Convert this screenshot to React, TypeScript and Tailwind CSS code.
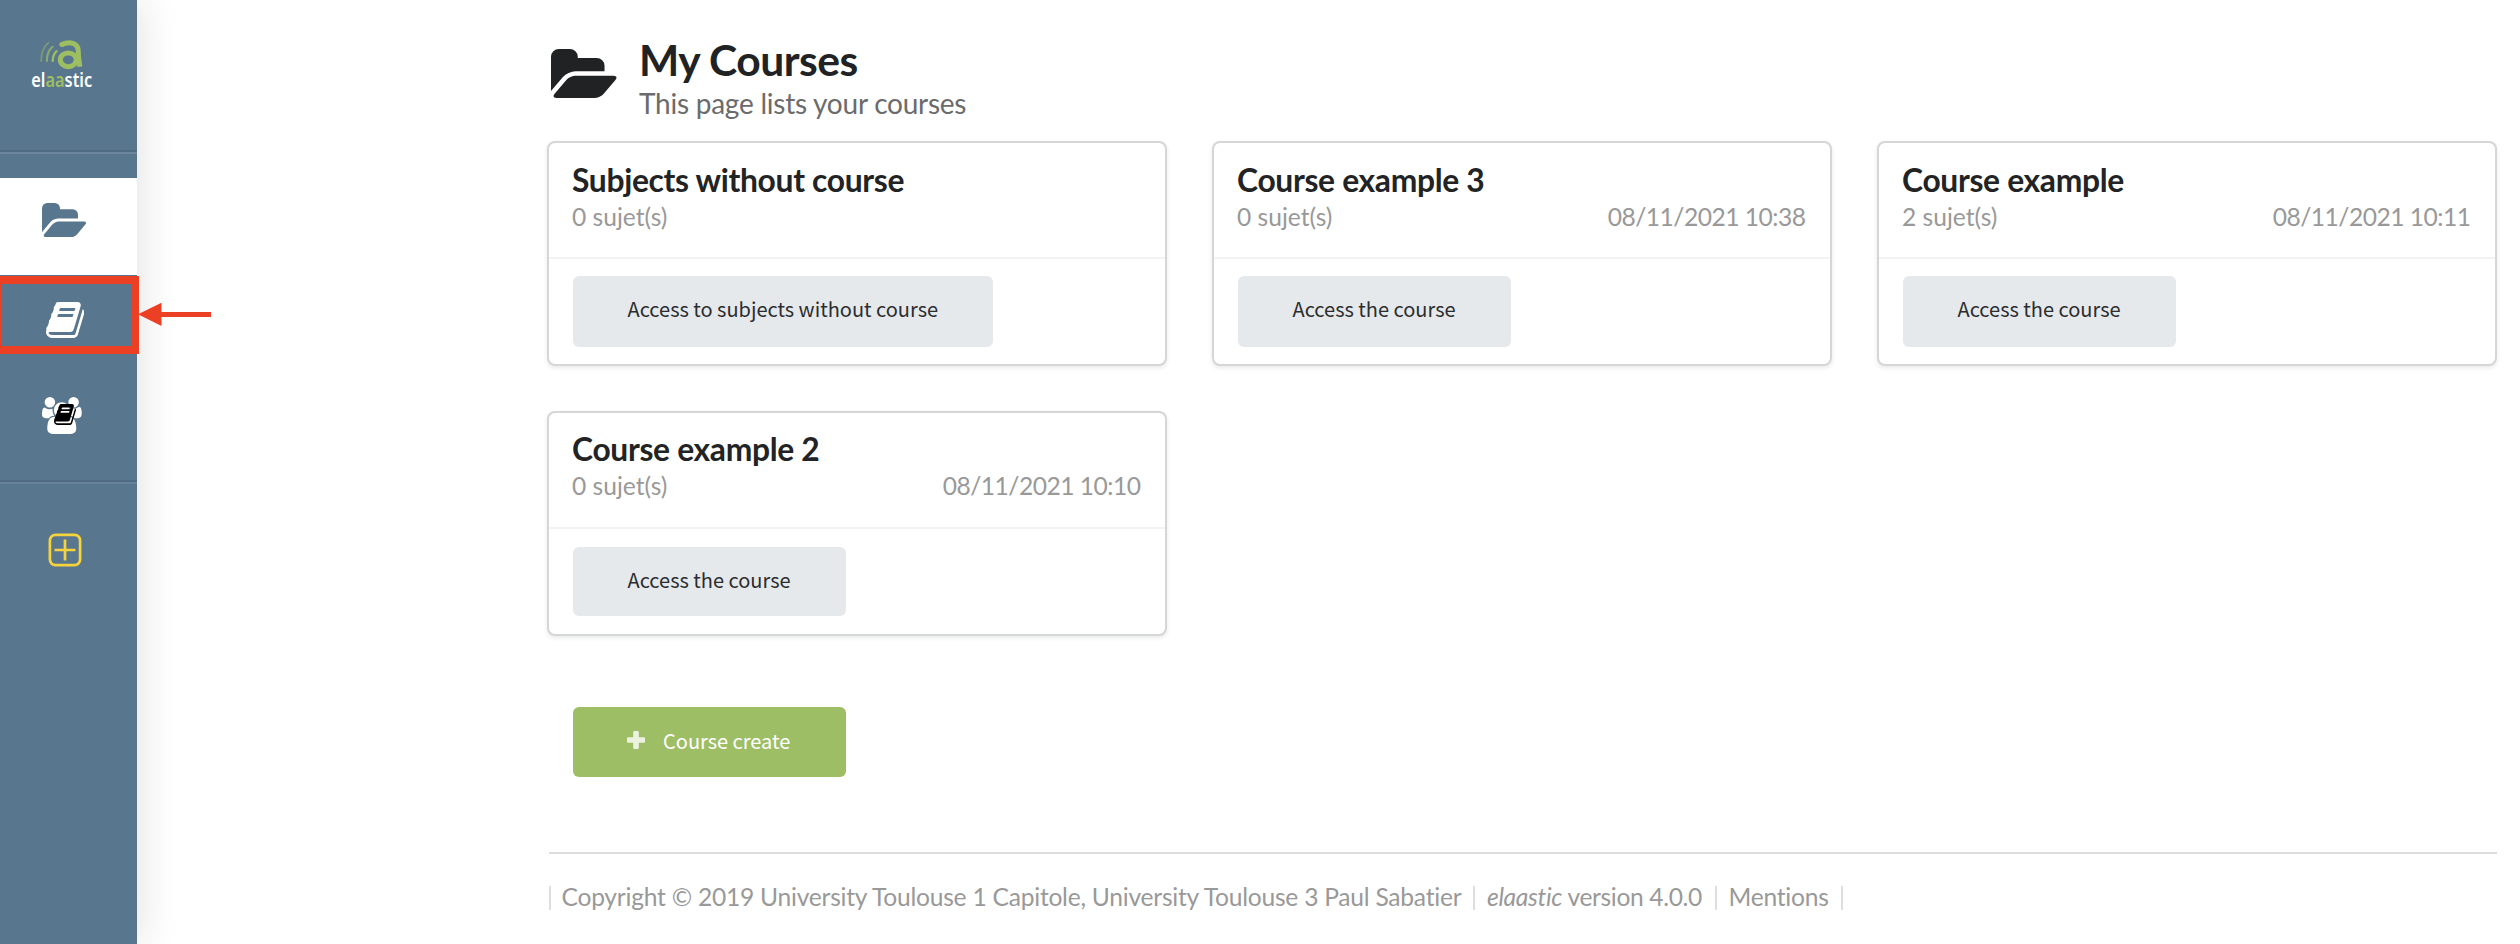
import type { ReactNode } from 'react';

const LATO = "font-['Lato',sans-serif] [font-variant-ligatures:none]";
const SOURCE = "font-['Noto_Sans_CJK_SC',sans-serif]";

function FolderOpenIcon({ className }: { className: string }) {
  return (
    <svg viewBox="0 128 1879 1408" preserveAspectRatio="none" fill="currentColor" className={className}>
      <path d="M1879 952q0 31-31 66l-336 396q-43 51-120.5 86.5t-143.5 35.5h-1088q-34 0-60.5-13t-26.5-43q0-31 31-66l336-396q43-51 120.5-86.5t143.5-35.5h1088q34 0 60.5 13t26.5 43zm-343-344v160h-832q-94 0-197 47.5t-164 119.5l-337 396-5 6q0-4-.5-12.5t-.5-12.5v-960q0-92 66-158t158-66h320q92 0 158 66t66 158v32h544q92 0 158 66t66 158z" />
    </svg>
  );
}

function BookIcon({ className }: { className: string }) {
  return (
    <svg viewBox="64 128 1667 1536" preserveAspectRatio="none" fill="currentColor" className={className}>
      <path d="M1703 478q40 57 18 129l-275 906q-19 64-76.5 107.5t-122.5 43.5h-923q-77 0-148.5-53.5t-99.5-131.5q-24-67-2-127 0-4 3-27t4-37q1-8-3-21.5t-3-19.5q2-11 8-21t16.5-23.5 16.5-23.5q23-38 45-91.5t30-91.5q3-10 .5-30t-.5-28q3-11 17-28t17-23q21-36 42-92t25-90q1-9-2.5-32t.5-28q4-13 22-30.5t22-22.5q19-26 42.5-84.5t27.5-96.5q1-8-3-25.5t-2-26.5q2-8 9-18t18-23 17-21q8-12 16.5-30.5t15-35 16-36 19.5-32 26.5-23.5 36-11.5 47.5 5.5l-1 3q38-9 51-9h761q74 0 114 56t18 130l-274 906q-36 119-71.5 153.5t-128.5 34.5h-869q-27 0-38 15-11 16-1 43 24 70 144 70h923q29 0 56-15.5t35-41.5l300-987q7-22 5-57 38 15 59 43zm-1064 2q-4 13 2 22.5t20 9.5h608q13 0 25.5-9.5t16.5-22.5l21-64q4-13-2-22.5t-20-9.5h-608q-13 0-25.5 9.5t-16.5 22.5zm-83 256q-4 13 2 22.5t20 9.5h608q13 0 25.5-9.5t16.5-22.5l21-64q4-13-2-22.5t-20-9.5h-608q-13 0-25.5 9.5t-16.5 22.5z" />
    </svg>
  );
}

function UsersIcon({ className }: { className: string }) {
  return (
    <svg viewBox="-64 0 1920 1792" preserveAspectRatio="none" fill="currentColor" className={className}>
      <path d="M529 896q-162 5-265 128h-134q-82 0-138-40.5t-56-118.5q0-353 124-353 6 0 43.5 21t97.5 42.5 119 21.5q67 0 133-23-5 37-5 66 0 159 93 291zm1071 637q0 120-73 189.5t-194 69.5h-874q-121 0-194-69.5t-73-189.5q0-53 3.5-103.5t14-109 26.5-108.5 43-97.5 62-81 85.5-53.5 111.5-20q10 0 43 21.5t73 48 107 48 135 21.5 135-21.5 107-48 73-48 43-21.5q61 0 111.5 20t85.5 53.5 62 81 43 97.5 26.5 108.5 14 109 3.5 103.5zm-1024-1277q0 106-75 181t-181 75-181-75-75-181 75-181 181-75 181 75 75 181zm704 384q0 159-112.5 271.5t-271.5 112.5-271.5-112.5-112.5-271.5 112.5-271.5 271.5-112.5 271.5 112.5 112.5 271.5zm576 225q0 78-56 118.5t-138 40.5h-134q-103-123-265-128 93-132 93-291 0-29-5-66 66 23 133 23 59 0 119-21.5t97.5-42.5 43.5-21q124 0 124 353zm-128-609q0 106-75 181t-181 75-181-75-75-181 75-181 181-75 181 75 75 181z" />
    </svg>
  );
}

function Logo() {
  return (
    <svg viewBox="26 34 74 66" className="h-[66px] w-[74px] overflow-visible" fill="none" strokeLinecap="round">
      <g stroke="#9ebe62">
        <path d="M41.2 61Q41 49 48.4 42.6" strokeWidth="1.8" opacity="0.5" />
        <path d="M46.9 61Q46.8 51.5 52.6 46.8" strokeWidth="2.1" opacity="0.75" />
        <path d="M52.7 61Q53 54.2 56.6 51.2" strokeWidth="2.3" />
        <path d="M61.8 44.5C69 41.2 78.3 42.3 78.3 51.5C78.3 58 79.2 61 79.8 66.7" strokeWidth="5" strokeLinecap="butt" />
        <path d="M61.8 44.5L62.5 44.2" strokeWidth="5" />
        <ellipse cx="68.3" cy="59.8" rx="8" ry="6.9" strokeWidth="5" />
      </g>
      <text x="31.3" y="87" textLength="60.8" lengthAdjust="spacingAndGlyphs" fill="#fff" className="font-['Noto_Sans',sans-serif] text-[20px] font-semibold">
        el<tspan fill="#9ebe62">aa</tspan>stic
      </text>
    </svg>
  );
}

function Sidebar() {
  return (
    <nav className="relative h-[944px] w-[137px] shrink-0 bg-[#58768e] shadow-[0_0_40px_rgba(34,36,38,0.15)]">
      <div className="flex h-[150px] items-start pt-[34px] pl-[26px]">
        <Logo />
      </div>
      <div className="h-1 border-t-2 border-b-2 border-t-[#506c83] border-b-[#6a859b]" />
      <div className="mt-6 flex h-[97px] items-start bg-white pt-[25px] pl-[42px]">
        <FolderOpenIcon className="h-[34px] w-11 text-[#58768e]" />
      </div>
      <div className="flex h-[99px] items-start pt-[27px] pl-[45.5px] text-white">
        <BookIcon className="h-9 w-[38.5px]" />
      </div>
      <div className="flex h-[106px] items-start pt-[22.5px] pl-[42px] text-white">
        <div className="relative">
          <UsersIcon className="h-[37px] w-[39.5px]" />
          <BookIcon className="absolute top-[7px] left-3 h-[21px] w-[22px] text-black" />
        </div>
      </div>
      <div className="h-1 border-t-2 border-b-2 border-t-[#506c85] border-b-[#66819a]" />
      <div className="flex pt-[48.5px] pl-[48px]">
        <svg viewBox="0 0 34 34" className="h-[34px] w-[34px]" fill="none" stroke="#f6d33c" strokeWidth="2.7">
          <rect x="1.9" y="1.9" width="30.2" height="30.2" rx="5.5" />
          <path d="M17 6.5v21M6.5 17h21" />
        </svg>
      </div>
      <div className="absolute top-[276px] left-[-7px] h-[78px] w-[146px] border-8 border-[#ec4025]" />
      <svg viewBox="0 0 74 24" className="absolute top-[302px] left-[138px] h-6 w-[74px]" fill="#ec4025">
        <path d="M0 12.3L23.5 .8V10H73V15H23.5V24Z" />
      </svg>
    </nav>
  );
}

interface Course {
  title: string;
  count: string;
  date?: string;
  action: string;
  second?: boolean;
}

const courses: Course[] = [
  { title: 'Subjects without course', count: '0 sujet(s)', action: 'Access to subjects without course' },
  { title: 'Course example 3', count: '0 sujet(s)', date: '08/11/2021 10:38', action: 'Access the course' },
  { title: 'Course example', count: '2 sujet(s)', date: '08/11/2021 10:11', action: 'Access the course' },
  { title: 'Course example 2', count: '0 sujet(s)', date: '08/11/2021 10:10', action: 'Access the course', second: true },
];

function CourseCard({ title, count, date, action, second }: Course) {
  return (
    <article className="h-[225px] rounded-lg border-2 border-[#d6d6d7] bg-white shadow-[0_2px_4px_rgba(34,36,38,0.1)]">
      <div className={`h-[114px] px-[23px] ${second ? 'pt-4' : 'pt-[17px]'}`}>
        <h2 className="mb-px text-[31.8px] leading-10 font-bold tracking-[-0.32px] text-[#222324]">{title}</h2>
        <div className="flex justify-between pr-[1.5px] text-[24.6px] leading-8 text-[#999]">
          <span>{count}</span>
          {date && <span className="tracking-[-0.5px]">{date}</span>}
        </div>
      </div>
      <div className={`border-t-2 border-[#f3f3f4] px-[23.5px] ${second ? 'pt-[18px]' : 'pt-[17px]'}`}>
        <button className={`rounded-md bg-[#e5e9ec] px-[55px] text-[20px] tracking-[-0.01px] text-[#2c2d2e] ${SOURCE} ${second ? 'h-[69px] pb-[3px]' : 'h-[71px] pb-[5px]'}`}>
          {action}
        </button>
      </div>
    </article>
  );
}

function FooterItem({ className, children }: { className: string; children?: ReactNode }) {
  return <span className={`h-6 shrink-0 border-l-2 border-[#dedede] whitespace-nowrap ${className}`}>{children}</span>;
}

export default function App() {
  return (
    <div className={`flex h-[944px] w-[2520px] overflow-hidden bg-white ${LATO}`}>
      <Sidebar />
      <main className="ml-[410px] w-[1950px]">
        <header className="flex h-[141px] pt-[34px] pl-1">
          <FolderOpenIcon className="mt-[15px] h-[49px] w-[65.5px] text-[#212223]" />
          <div className="ml-[22.5px] pt-px">
            <h1 className="text-[42.6px] leading-[50px] font-bold tracking-[-0.5px] text-[#212223]">My Courses</h1>
            <p className="mt-px text-[28px] leading-[34px] tracking-[-0.24px] text-[#6b6b6b]">This page lists your courses</p>
          </div>
        </header>
        <section className="grid grid-cols-[620px_620px_620px] gap-[45px]">
          {courses.map((course) => (
            <CourseCard key={course.title} {...course} />
          ))}
        </section>
        <button className={`mt-[71px] ml-[25.5px] flex h-[70px] w-[273px] items-center rounded-md bg-[#9ebe65] pl-[54px] text-[20px] text-white ${SOURCE}`}>
          <svg viewBox="0 0 18 18" className="mb-1 h-[18px] w-[18px] opacity-80" fill="#fff">
            <path d="M7.2 0h3.6a1 1 0 0 1 1 1v5.3h5.2a1 1 0 0 1 1 1v3.4a1 1 0 0 1-1 1h-5.2v5.3a1 1 0 0 1-1 1h-3.6a1 1 0 0 1-1-1v-5.3h-5.2a1 1 0 0 1-1-1v-3.4a1 1 0 0 1 1-1h5.2v-5.3a1 1 0 0 1 1-1z" />
          </svg>
          <span className="ml-[18.5px] pb-[2px]">Course create</span>
        </button>
        <footer className="mt-[75px] ml-[2px] flex w-[1948px] border-t-2 border-[#dcdcdc] pt-8 text-[24.6px] leading-[22px] tracking-[-0.24px] text-[#999]">
          <FooterItem className="w-[924px] pl-[10.5px]">Copyright © 2019 University Toulouse 1 Capitole, University Toulouse 3 Paul Sabatier</FooterItem>
          <FooterItem className="w-[242px] pl-3 tracking-[-0.35px]">
            <i>elaastic</i> version 4.0.0
          </FooterItem>
          <FooterItem className="w-[126px] pl-[11.5px]">Mentions</FooterItem>
          <FooterItem className="w-1" />
        </footer>
      </main>
    </div>
  );
}
